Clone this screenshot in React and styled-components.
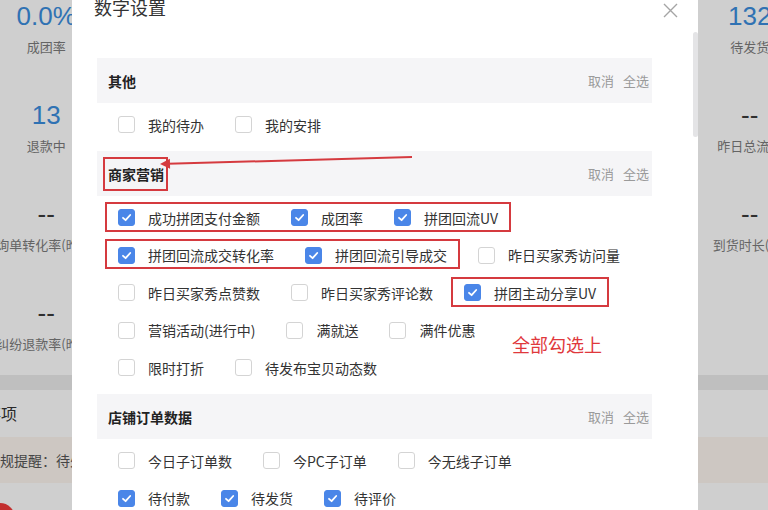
import React from 'react';
import styled, { createGlobalStyle } from 'styled-components';

const GlobalStyle = createGlobalStyle`
    html, body {
        margin: 0;
        padding: 0;
    }
    body {
        width: 768px;
        height: 510px;
        overflow: hidden;
        font-family: "Noto Sans CJK SC", "Noto Sans", sans-serif;
    }
`;

const Screen = styled.div`
    position: relative;
    width: 768px;
    height: 510px;
    overflow: hidden;
    background: #ececec;
`;

/* ---------- page behind the dialog ---------- */

const Dashboard = styled.div`
    width: 880px;
    margin-left: -60px;
    margin-top: -21px;
`;

const StatsCard = styled.div`
    display: grid;
    grid-template-columns: repeat(8, 100.5px);
    grid-auto-rows: 99px;
    padding-left: 56px;
    background: #fff;
`;

const Stat = styled.div`
    display: flex;
    flex-direction: column;
    align-items: center;
    padding-top: 22px;
    white-space: nowrap;
`;

const StatValue = styled.div`
    font-family: "Liberation Sans", Arial, sans-serif;
    font-size: 26px;
    line-height: 30px;
    color: ${(p) => (p.$empty ? '#3a3a3a' : '#3b8ddd')};
`;

const StatLabel = styled.div`
    margin-top: 6px;
    font-size: 13px;
    line-height: 20px;
    color: #7c7c7c;
`;

const TodoCard = styled.div`
    margin-top: 15px;
    height: 200px;
    padding: 0 13px;
    background: #fff;
`;

const TodoTitle = styled.div`
    height: 47px;
    line-height: 47px;
    font-size: 16px;
    color: #333;
`;

const Notice = styled.div`
    height: 46px;
    line-height: 46px;
    padding-left: 33px;
    background: #fdf5ef;
    font-size: 14px;
    color: #555;
`;

const BadgeRow = styled.div`
    display: flex;
    margin-top: 20px;
    padding-left: 32px;
`;

const Badge = styled.span`
    width: 30px;
    height: 30px;
    border-radius: 50%;
    background: #f03a3a;
`;

const Mask = styled.div`
    position: absolute;
    inset: 0;
    background: rgba(0, 0, 0, 0.19);
`;

/* ---------- dialog ---------- */

const Modal = styled.div`
    position: absolute;
    left: 72px;
    top: -12px;
    width: 626px;
    height: 540px;
    overflow: hidden;
    background: #fff;
`;

const ModalHeader = styled.div`
    display: flex;
    align-items: center;
    justify-content: space-between;
    height: 38px;
    padding: 0 20px 0 22px;
`;

const ModalTitle = styled.div`
    font-size: 18px;
    line-height: 24px;
    color: #333;
`;

const Close = styled.span`
    display: flex;
    margin-top: 6px;
    cursor: pointer;
`;

const ModalBody = styled.div`
    padding: 32px 46px 0 25px;
`;

const SectionHeader = styled.div`
    display: flex;
    align-items: center;
    justify-content: space-between;
    height: 45px;
    padding: 0 3px 0 11px;
    background: #f5f5f7;
`;

const SectionTitle = styled.span`
    position: relative;
    font-size: 14px;
    font-weight: 700;
    line-height: 20px;
    color: #222;

    &::after {
        content: '';
        display: ${(p) => (p.$marked ? 'block' : 'none')};
        position: absolute;
        top: -7px;
        bottom: -7px;
        left: -5px;
        right: -4px;
        border: 2px solid #d53a3f;
    }
`;

const Actions = styled.div`
    display: flex;
    gap: 9px;
    font-size: 13px;
    color: #9a9a9a;
`;

const Items = styled.div`
    padding: 3px 0 7.5px 21px;
`;

const Row = styled.div`
    display: flex;
    align-items: center;
    gap: 31px;
    height: 37.5px;
`;

const Group = styled.div`
    position: relative;
    display: flex;
    align-items: center;
    gap: 31px;

    &::after {
        content: '';
        position: absolute;
        top: -6px;
        bottom: -4px;
        left: -13px;
        right: -13px;
        border: 2px solid #d53a3f;
    }
`;

const Item = styled.label`
    display: flex;
    align-items: center;
    gap: 13px;
    font-size: 14px;
    line-height: 20px;
    color: #333;
    white-space: nowrap;
`;

const Box = styled.span`
    display: flex;
    align-items: center;
    justify-content: center;
    box-sizing: border-box;
    width: 17px;
    height: 17px;
    border-radius: 3px;
    border: 1px solid ${(p) => (p.$checked ? '#4a86e8' : '#d4d4d4')};
    background: ${(p) => (p.$checked ? '#4a86e8' : '#fff')};
`;

const Arrow = styled.svg`
    position: absolute;
    left: 86px;
    top: 162px;
`;

const Note = styled.div`
    position: absolute;
    left: 440px;
    top: 345px;
    font-size: 18px;
    line-height: 22px;
    color: #e0383c;
`;

const ScrollThumb = styled.div`
    position: absolute;
    left: 621px;
    top: 44px;
    width: 5px;
    height: 105px;
    border-radius: 3px;
    background: #e4e4e6;
`;

const stats = [
    [['0.0%', '成团率'], ['0', '待成团'], ['0', '待付款'], ['0', '待收货'], ['0', '售后中'], ['0', '待评价'], ['0', '今日订单'], ['132', '待发货']],
    [['13', '退款中'], ['--', '访客数'], ['--', '浏览量'], ['--', '支付金额'], ['--', '支付人数'], ['--', '客单价'], ['--', '转化率'], ['--', '昨日总流量']],
    [['--', '询单转化率(昨日)'], ['--', '回复率'], ['--', '响应时长'], ['--', '好评率'], ['--', '差评数'], ['--', '退货率'], ['--', '发货时长'], ['--', '到货时长(天)']],
    [['--', '纠纷退款率(昨日)'], ['--', '投诉率'], ['--', '介入率'], ['--', '违规数'], ['--', '扣分'], ['--', '罚款'], ['--', '揽收时长'], null],
];

const sections = [
    {
        title: '其他',
        rows: [{ items: [{ label: '我的待办' }, { label: '我的安排' }] }],
    },
    {
        title: '商家营销',
        marked: true,
        rows: [
            {
                mark: [0, 3],
                items: [
                    { label: '成功拼团支付金额', checked: true },
                    { label: '成团率', checked: true },
                    { label: '拼团回流UV', checked: true },
                ],
            },
            {
                mark: [0, 2],
                items: [
                    { label: '拼团回流成交转化率', checked: true },
                    { label: '拼团回流引导成交', checked: true },
                    { label: '昨日买家秀访问量' },
                ],
            },
            {
                mark: [2, 3],
                items: [
                    { label: '昨日买家秀点赞数' },
                    { label: '昨日买家秀评论数' },
                    { label: '拼团主动分享UV', checked: true },
                ],
            },
            { items: [{ label: '营销活动(进行中)' }, { label: '满就送' }, { label: '满件优惠' }] },
            { items: [{ label: '限时打折' }, { label: '待发布宝贝动态数' }] },
        ],
    },
    {
        title: '店铺订单数据',
        rows: [
            { items: [{ label: '今日子订单数' }, { label: '今PC子订单' }, { label: '今无线子订单' }] },
            {
                items: [
                    { label: '待付款', checked: true },
                    { label: '待发货', checked: true },
                    { label: '待评价', checked: true },
                ],
            },
        ],
    },
];

const Check = ({ checked }) => (
    <Box $checked={checked}>
        {checked && (
            <svg width="11" height="11" viewBox="0 0 11 11">
                <polyline points="2,5.8 4.6,8.2 9.2,3" fill="none" stroke="#fff" strokeWidth="1.8" strokeLinecap="round" strokeLinejoin="round" />
            </svg>
        )}
    </Box>
);

const Option = ({ item }) => (
    <Item>
        <Check checked={item.checked} />
        {item.label}
    </Item>
);

const OptionRow = ({ row }) => {
    const options = row.items.map((item) => <Option key={item.label} item={item} />);
    if (!row.mark) return <Row>{options}</Row>;
    const [from, to] = row.mark;
    return (
        <Row>
            {options.slice(0, from)}
            <Group>{options.slice(from, to)}</Group>
            {options.slice(to)}
        </Row>
    );
};

const App = () => (
    <Screen>
        <GlobalStyle />
        <Dashboard>
            <StatsCard>
                {stats.flat().map((s, i) =>
                    s ? (
                        <Stat key={i}>
                            <StatValue $empty={s[0] === '--'}>{s[0]}</StatValue>
                            <StatLabel>{s[1]}</StatLabel>
                        </Stat>
                    ) : (
                        <Stat key={i} />
                    )
                )}
            </StatsCard>
            <TodoCard>
                <TodoTitle>待办事项</TodoTitle>
                <Notice>违规提醒：待处理违规 0 条</Notice>
                <BadgeRow>
                    <Badge />
                </BadgeRow>
            </TodoCard>
        </Dashboard>
        <Mask />
        <Modal>
            <ModalHeader>
                <ModalTitle>数字设置</ModalTitle>
                <Close>
                    <svg width="15" height="15" viewBox="0 0 15 15">
                        <path d="M1 1L14 14M14 1L1 14" stroke="#a5a5a5" strokeWidth="1.4" />
                    </svg>
                </Close>
            </ModalHeader>
            <ModalBody>
                {sections.map((section) => (
                    <div key={section.title}>
                        <SectionHeader>
                            <SectionTitle $marked={section.marked}>{section.title}</SectionTitle>
                            <Actions>
                                <span>取消</span>
                                <span>全选</span>
                            </Actions>
                        </SectionHeader>
                        <Items>
                            {section.rows.map((row, i) => (
                                <OptionRow key={i} row={row} />
                            ))}
                        </Items>
                    </div>
                ))}
            </ModalBody>
            <Arrow width="258" height="20" viewBox="0 0 258 20">
                <line x1="254" y1="7" x2="10" y2="13.8" stroke="#d53a3f" strokeWidth="2" />
                <polygon points="2,14 12.1,18.7 11.9,8.7" fill="#d53a3f" />
            </Arrow>
            <Note>全部勾选上</Note>
            <ScrollThumb />
        </Modal>
    </Screen>
);

export default App;
